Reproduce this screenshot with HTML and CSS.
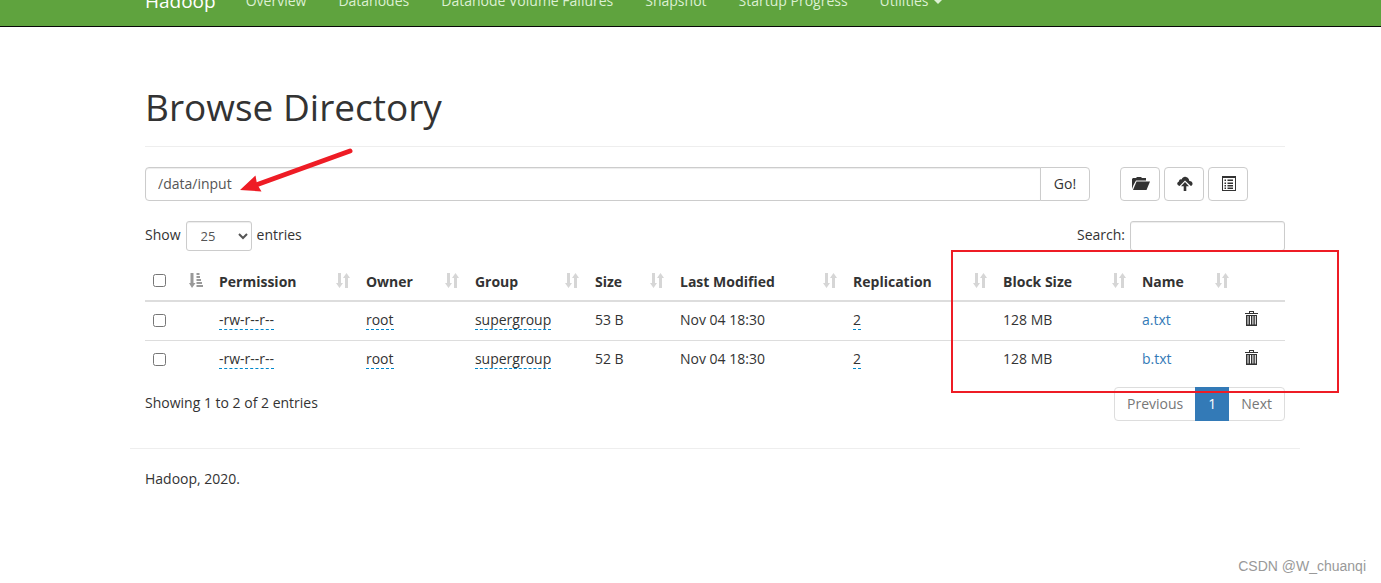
FILE: index.html
```html
<!DOCTYPE html>
<html lang="en">
<head>
<meta charset="utf-8">
<title>Browsing HDFS</title>
<link rel="stylesheet" href="styles.css">
</head>
<body>
<svg class="defs" aria-hidden="true">
  <symbol id="sort" viewBox="0 0 14 15"><path d="M2 0h3v10h2L3.500 15 0 10h2zM9 15h3V5h2L10.500 0 7 5h2z"/></symbol>
  <symbol id="sorted" viewBox="0 0 14 15"><path d="M1.500 0h3v10H6.500L3 15 0 10h1.500zM7.500 0h3v2h-3zM7.500 3h3.500v2H7.500zM7.500 6h4.500v2H7.500zM7.500 9h5.500v2H7.500zM7.500 12h6.500v2H7.500z"/></symbol>
  <symbol id="trash" viewBox="0 0 13 15"><path fill-rule="evenodd" d="M4 0h5v2h4v1H0V2h4zm1 1v1h3V1zM1 4h11v11H1zm1.500 1v8.500h1V5zm2.500 0v8.500h1V5zm2.400 0v8.500h1V5zm2.400 0v8.500h1V5z"/></symbol>
</svg>
<header class="navbar">
  <a class="brand" href="#">Hadoop</a>
  <nav class="nav">
    <a href="#">Overview</a>
    <a href="#">Datanodes</a>
    <a href="#">Datanode Volume Failures</a>
    <a href="#">Snapshot</a>
    <a href="#">Startup Progress</a>
    <a href="#">Utilities <span class="caret"></span></a>
  </nav>
</header>
<main class="container">
  <h1>Browse Directory</h1>
  <div class="row">
    <form class="path">
      <input class="control" type="text" aria-label="Directory" value="/data/input">
      <button class="btn go" type="button">Go!</button>
    </form>
    <div class="tools">
      <button class="btn" type="button" aria-label="Create directory"><svg width="18" height="14" viewBox="0 0 18 14"><path d="M0 12V2l1-1h3l1-1h4l1 1h4v2.500H4L1.500 8z"/><path d="M4.500 4.500H18L14.500 13H1z"/></svg></button>
      <button class="btn" type="button" aria-label="Upload files"><svg width="16" height="15" viewBox="0 0 16 15"><path d="M2.500 10C.5 9.500-.5 7.500.8 6.200c.4-.4.8-.6 1.200-.7 0-1.700 1.300-2.600 2.600-2C5.400 1.200 7.400.5 9 1c2 .5 3.300 2.100 3.300 4 2.200-.2 3.800 1.800 3.100 3.600-.3.700-.8 1.200-1.500 1.400L8 4.500z"/><path d="M8 6l4 4.200H9.300V15H6.700v-4.800H4z"/></svg></button>
      <button class="btn" type="button" aria-label="Cut and paste"><svg width="14" height="15" viewBox="0 0 14 15"><path fill-rule="evenodd" d="M0 0h14v15H0zm1 2v12h12V2z"/><path d="M2.500 3.500h1.500V5H2.500zm3 0H11V5H5.500zm-3 3h1.500V8H2.500zm3 0H11V8H5.500zm-3 2.500h1.500v1.500H2.500zm3 0H11v1.500H5.500zm-3 2.500h1.500V13H2.500zm3 0H11V13H5.500z"/></svg></button>
    </div>
  </div>
  <div class="bar filters">
    <label class="field">Show
      <select class="control small"><option>10</option><option selected>25</option><option>50</option></select>
      entries</label>
    <label class="field search">Search: <input class="control small" type="search"></label>
  </div>
  <table>
    <colgroup><col class="c-check"><col class="c-perm"><col class="c-owner"><col class="c-group"><col class="c-size"><col class="c-date"><col class="c-repl"><col class="c-block"><col class="c-name"><col></colgroup>
    <thead>
      <tr>
        <th><div class="cell"><input type="checkbox" aria-label="Select all"><svg class="sort active"><use href="#sorted"/></svg></div></th>
        <th><div class="cell">Permission<svg class="sort"><use href="#sort"/></svg></div></th>
        <th><div class="cell">Owner<svg class="sort"><use href="#sort"/></svg></div></th>
        <th><div class="cell">Group<svg class="sort"><use href="#sort"/></svg></div></th>
        <th><div class="cell">Size<svg class="sort"><use href="#sort"/></svg></div></th>
        <th><div class="cell">Last Modified<svg class="sort"><use href="#sort"/></svg></div></th>
        <th><div class="cell">Replication<svg class="sort"><use href="#sort"/></svg></div></th>
        <th><div class="cell">Block Size<svg class="sort"><use href="#sort"/></svg></div></th>
        <th><div class="cell">Name<svg class="sort"><use href="#sort"/></svg></div></th>
        <th></th>
      </tr>
    </thead>
    <tbody>
      <tr>
        <td><div class="cell"><input type="checkbox" aria-label="Select a.txt"></div></td>
        <td><span class="edit">-rw-r--r--</span></td>
        <td><span class="edit">root</span></td>
        <td><span class="edit">supergroup</span></td>
        <td>53 B</td>
        <td>Nov 04 18:30</td>
        <td><span class="edit">2</span></td>
        <td>128 MB</td>
        <td><a href="#">a.txt</a></td>
        <td><button class="delete" type="button" aria-label="Delete a.txt"><svg width="13" height="15"><use href="#trash"/></svg></button></td>
      </tr>
      <tr>
        <td><div class="cell"><input type="checkbox" aria-label="Select b.txt"></div></td>
        <td><span class="edit">-rw-r--r--</span></td>
        <td><span class="edit">root</span></td>
        <td><span class="edit">supergroup</span></td>
        <td>52 B</td>
        <td>Nov 04 18:30</td>
        <td><span class="edit">2</span></td>
        <td>128 MB</td>
        <td><a href="#">b.txt</a></td>
        <td><button class="delete" type="button" aria-label="Delete b.txt"><svg width="13" height="15"><use href="#trash"/></svg></button></td>
      </tr>
    </tbody>
  </table>
  <div class="bar">
    <div>Showing 1 to 2 of 2 entries</div>
    <nav class="pages" aria-label="Pages">
      <a href="#">Previous</a><a class="current" href="#">1</a><a href="#">Next</a>
    </nav>
  </div>
  <footer class="footer">Hadoop, 2020.</footer>
</main>
<svg class="arrow" width="116" height="48" viewBox="0 0 116 48" aria-hidden="true"><path d="M110 4L16 38" stroke="#ee1c25" stroke-width="5" stroke-linecap="round"/><path d="M0 43L15.500 28.500 17 37 21.500 44.500z" fill="#ee1c25"/></svg>
<div class="highlight"></div>
<div class="watermark">CSDN @W_chuanqi</div>
</body>
</html>
```
FILE: styles.css
```css
* { box-sizing: border-box; }
body {
  margin: 0;
  position: relative;
  min-height: 100vh;
  overflow: hidden;
  background: #fff;
  color: #333;
  font: 14px/22px "Open Sans", "Noto Sans", sans-serif;
}
.defs { display: none; }
a { color: #337ab7; text-decoration: none; }
input, select, button { font: inherit; color: inherit; margin: 0; }
svg { fill: currentColor; }

/* the bar is scrolled partly out of view */
.navbar {
  display: flex;
  align-items: center;
  min-height: 51px;
  margin-top: -24px;
  padding-left: 145px;
  background: #5fa33e;
  border-bottom: 1px solid #080808;
}
.brand { color: #fff; font-size: 19px; margin-right: 14px; }
.nav { display: flex; }
.nav a { padding: 0 16px; color: #dcf0d3; white-space: nowrap; }
.caret {
  display: inline-block;
  margin-left: 2px;
  vertical-align: middle;
  border: 4px solid transparent;
  border-top-color: currentColor;
  border-bottom: 0;
}

.container { padding: 0 96px 0 145px; }
h1 {
  margin: 60px 0 20px;
  padding-bottom: 19px;
  border-bottom: 1px solid #eee;
  font-size: 37px;
  line-height: 40px;
  font-weight: 400;
}
.row { display: flex; margin: 0 -15px 20px; }
.path { display: flex; width: 83.33%; padding: 0 15px; }
.tools { display: flex; gap: 4px; padding: 0 15px; }
.control {
  height: 34px;
  padding: 0 12px;
  border: 1px solid #ccc;
  border-radius: 4px;
  background: #fff;
  color: #555;
  box-shadow: inset 0 1px 1px rgba(0, 0, 0, .075);
}
.path .control { flex: 1; min-width: 0; padding-bottom: 2px; border-radius: 4px 0 0 4px; }
.btn {
  display: flex;
  align-items: center;
  justify-content: center;
  width: 40px;
  height: 34px;
  padding: 0 0 1px 2px;
  border: 1px solid #ccc;
  border-radius: 4px;
  background: #fff;
}
.btn.go { width: 50px; margin-left: -1px; padding: 0; border-radius: 0 4px 4px 0; }

.bar { display: flex; justify-content: space-between; line-height: 32px; }
.filters { line-height: 28px; margin-bottom: 11px; }
.field { display: flex; gap: 5px; }
.control.small { height: 30px; font-size: 13px; border-radius: 3px; }
select.small { width: 66px; padding: 0 0 0 10px; }
.search .small { width: 155px; }

table { width: 100%; table-layout: fixed; border-collapse: collapse; margin-bottom: 8px; }
th, td { text-align: left; vertical-align: top; white-space: nowrap; }
th { padding: 9px 8px 7px; font-weight: 700; border-bottom: 2px solid #ddd; }
td { padding: 7px 8px 9px; border-top: 1px solid #ddd; }
tbody tr:first-child td { border-top: 0; }
.c-check { width: 5.79%; }
.c-perm { width: 12.89%; }
.c-owner { width: 9.56%; }
.c-group { width: 10.53%; }
.c-size { width: 7.46%; }
.c-date { width: 15.18%; }
.c-repl { width: 13.16%; }
.c-block { width: 12.19%; }
.c-name { width: 9.04%; }
.cell { display: flex; align-items: center; justify-content: space-between; height: 22px; }
th input { margin-bottom: 3px; }
.sort { width: 14px; height: 15px; color: #d6d6d6; margin-bottom: 4px; }
.sort.active { color: #999; }
.edit { border-bottom: 1px dashed #08c; }
.delete { display: flex; margin-top: 2px; padding: 0; border: 0; background: none; }

.pages { display: flex; }
.pages a { padding: 0 12px; border: 1px solid #ddd; color: #777; }
.pages a + a { margin-left: -1px; }
.pages a:first-child { border-radius: 4px 0 0 4px; }
.pages a:last-child { border-radius: 0 4px 4px 0; }
.pages .current { position: relative; background: #337ab7; border-color: #337ab7; color: #fff; }
.footer { margin: 27px -15px 0; padding: 19px 15px 0; border-top: 1px solid #eee; }

.arrow { position: absolute; left: 240px; top: 147px; }
.highlight {
  position: absolute;
  left: 951px;
  top: 250px;
  width: 388px;
  height: 143px;
  border: 2px solid #ee1c25;
}
.watermark {
  position: absolute;
  right: 15px;
  bottom: 6px;
  color: #999;
  font-family: "Liberation Sans", sans-serif;
  font-size: 14px;
}
```
